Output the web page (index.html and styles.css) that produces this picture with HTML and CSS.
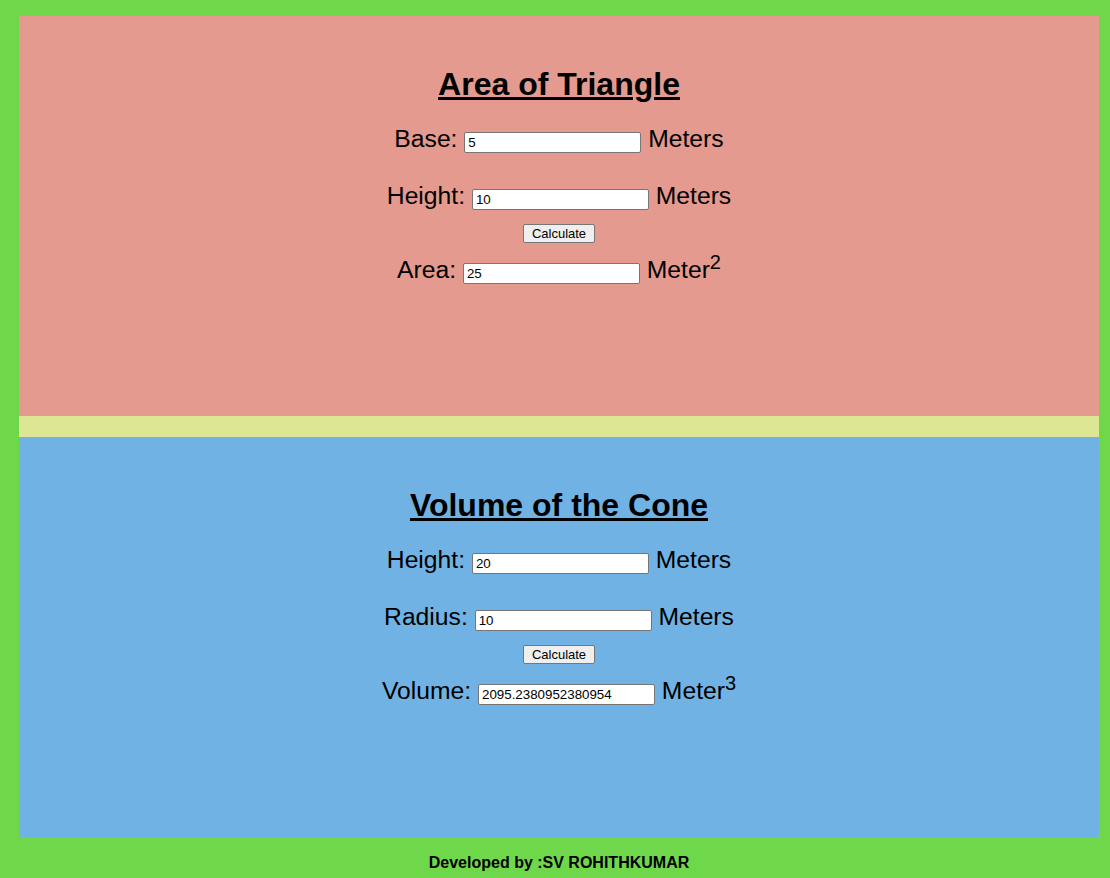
FILE: index.html
```html
<!DOCTYPE html>
<html>
<head>
<meta charset="utf-8">
<title>Calculators</title>
<link rel="stylesheet" href="styles.css">
</head>
<body>
<div class="page">
  <section class="card triangle">
    <h1 class="title">Area of Triangle</h1>
    <div class="row">Base: <input class="field" type="text" value="5"> Meters</div>
    <div class="row row2">Height: <input class="field" type="text" value="10"> Meters</div>
    <button class="btn">Calculate</button>
    <div class="row row3">Area: <input class="field" type="text" value="25"> Meter<sup>2</sup></div>
  </section>
  <div class="strip"></div>
  <section class="card cone">
    <h1 class="title">Volume of the Cone</h1>
    <div class="row">Height: <input class="field" type="text" value="20"> Meters</div>
    <div class="row row2">Radius: <input class="field" type="text" value="10"> Meters</div>
    <button class="btn">Calculate</button>
    <div class="row row3">Volume: <input class="field" type="text" value="2095.2380952380954"> Meter<sup>3</sup></div>
  </section>
  <footer class="footer">Developed by :SV ROHITHKUMAR</footer>
</div>
</body>
</html>
```

FILE: styles.css
```css
html, body {
  margin: 0;
  padding: 0;
}
body {
  background: #6fd84a;
  font-family: "Liberation Sans", Arial, sans-serif;
  color: #000;
}
.page {
  padding: 16px 11px 0 19px;
}
.card {
  height: 400px;
  box-sizing: border-box;
  padding-top: 50px;
  text-align: center;
}
.triangle {
  background: #e49a8e;
}
.cone {
  background: #71b2e4;
}
.strip {
  height: 21px;
  background: #dde692;
}
.title {
  margin: 0;
  font-size: 32px;
  line-height: 37px;
  font-weight: bold;
  text-decoration: underline;
}
.row {
  font-size: 24.7px;
  line-height: 28px;
  height: 28px;
  margin-top: 22px;
}
.row2 {
  margin-top: 29px;
}
.row3 {
  margin-top: 13px;
}
.field {
  box-sizing: border-box;
  width: 177px;
  height: 21px;
  border: 1px solid #767676;
  border-radius: 2px;
  padding: 1px 3px;
  font-family: "Liberation Sans", Arial, sans-serif;
  font-size: 13.33px;
  background: #fff;
  color: #000;
  vertical-align: baseline;
}
.row sup {
  font-size: 20px;
  line-height: 0;
  vertical-align: 9px;
}
.btn {
  display: block;
  margin: 14px auto 0;
  box-sizing: border-box;
  width: 72px;
  height: 19px;
  padding: 0 6px;
  border: 1px solid #767676;
  border-radius: 2px;
  background: #efefef;
  font-family: "Liberation Sans", Arial, sans-serif;
  font-size: 13px;
  line-height: 15px;
  color: #000;
}
.footer {
  text-align: center;
  font-weight: bold;
  font-size: 16px;
  line-height: 18px;
  padding-top: 17px;
  height: 24px;
}
```
